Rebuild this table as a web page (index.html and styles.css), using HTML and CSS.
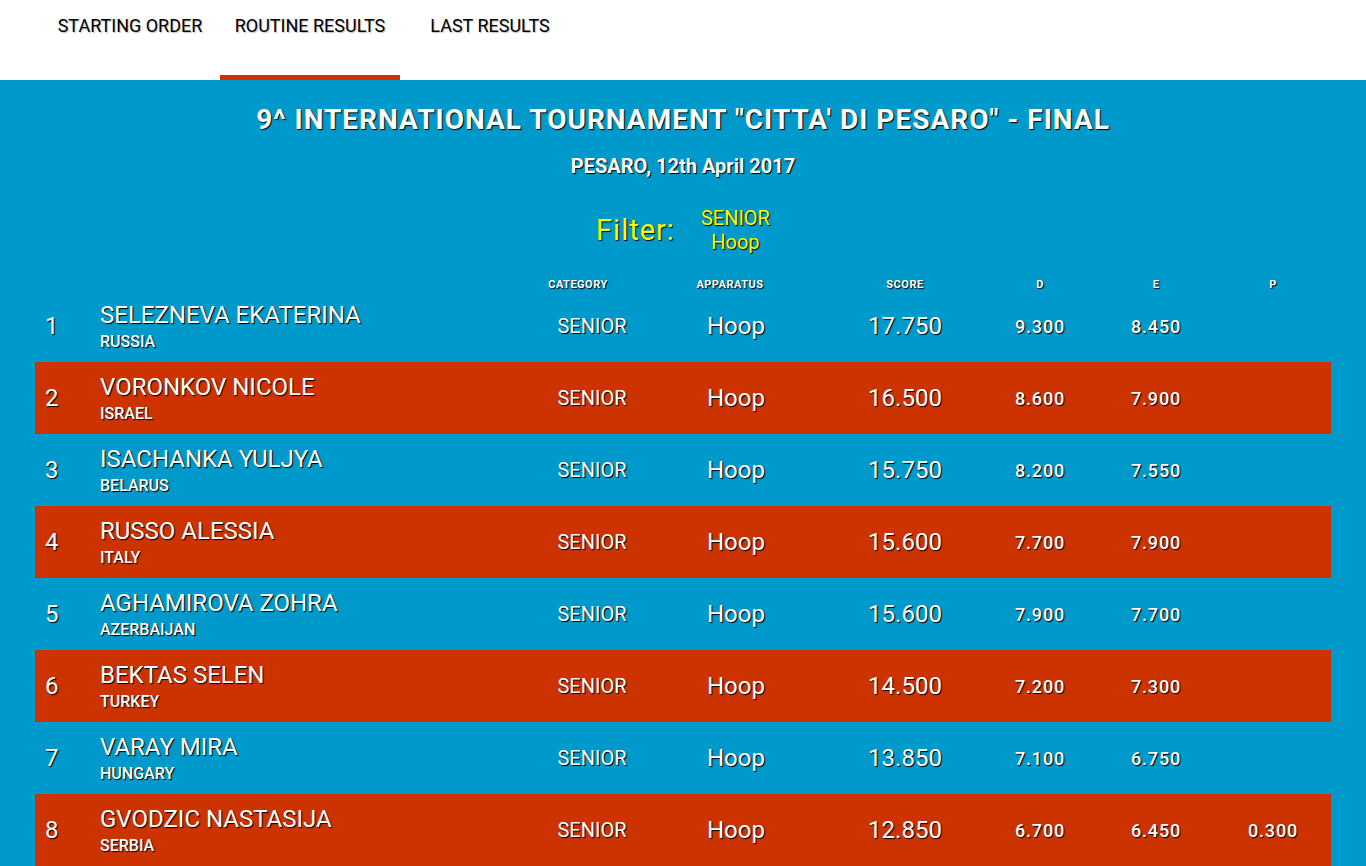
FILE: index.html
```html
<!DOCTYPE html>
<html lang="en">
<head>
<meta charset="utf-8">
<title>Routine Results</title>
<link rel="stylesheet" href="styles.css">
</head>
<body>
<header class="topbar">
  <nav class="tabs">
    <a class="tab" href="#">STARTING ORDER</a>
    <a class="tab active" href="#">ROUTINE RESULTS</a>
    <a class="tab" href="#">LAST RESULTS</a>
  </nav>
</header>
<main class="board">
  <h1 class="title">9^ INTERNATIONAL TOURNAMENT "CITTA' DI PESARO" - FINAL</h1>
  <p class="subtitle">PESARO, 12th April 2017</p>
  <div class="filter">
    <span class="filter-label">Filter:</span>
    <div class="filter-values">
      <span>SENIOR</span>
      <span>Hoop</span>
    </div>
  </div>
  <div class="results">
    <div class="row head">
      <span></span>
      <span></span>
      <span class="c-cat">CATEGORY</span>
      <span class="c-app">APPARATUS</span>
      <span class="c-score">SCORE</span>
      <span class="c-d">D</span>
      <span class="c-e">E</span>
      <span class="c-p">P</span>
    </div>
    <div class="row">
      <span class="rank">1</span>
      <div class="athlete"><span class="name">SELEZNEVA EKATERINA</span><span class="country">RUSSIA</span></div>
      <span class="c-cat">SENIOR</span><span class="c-app">Hoop</span><span class="c-score">17.750</span><span class="c-d">9.300</span><span class="c-e">8.450</span><span class="c-p"></span>
    </div>
    <div class="row">
      <span class="rank">2</span>
      <div class="athlete"><span class="name">VORONKOV NICOLE</span><span class="country">ISRAEL</span></div>
      <span class="c-cat">SENIOR</span><span class="c-app">Hoop</span><span class="c-score">16.500</span><span class="c-d">8.600</span><span class="c-e">7.900</span><span class="c-p"></span>
    </div>
    <div class="row">
      <span class="rank">3</span>
      <div class="athlete"><span class="name">ISACHANKA YULJYA</span><span class="country">BELARUS</span></div>
      <span class="c-cat">SENIOR</span><span class="c-app">Hoop</span><span class="c-score">15.750</span><span class="c-d">8.200</span><span class="c-e">7.550</span><span class="c-p"></span>
    </div>
    <div class="row">
      <span class="rank">4</span>
      <div class="athlete"><span class="name">RUSSO ALESSIA</span><span class="country">ITALY</span></div>
      <span class="c-cat">SENIOR</span><span class="c-app">Hoop</span><span class="c-score">15.600</span><span class="c-d">7.700</span><span class="c-e">7.900</span><span class="c-p"></span>
    </div>
    <div class="row">
      <span class="rank">5</span>
      <div class="athlete"><span class="name">AGHAMIROVA ZOHRA</span><span class="country">AZERBAIJAN</span></div>
      <span class="c-cat">SENIOR</span><span class="c-app">Hoop</span><span class="c-score">15.600</span><span class="c-d">7.900</span><span class="c-e">7.700</span><span class="c-p"></span>
    </div>
    <div class="row">
      <span class="rank">6</span>
      <div class="athlete"><span class="name">BEKTAS SELEN</span><span class="country">TURKEY</span></div>
      <span class="c-cat">SENIOR</span><span class="c-app">Hoop</span><span class="c-score">14.500</span><span class="c-d">7.200</span><span class="c-e">7.300</span><span class="c-p"></span>
    </div>
    <div class="row">
      <span class="rank">7</span>
      <div class="athlete"><span class="name">VARAY MIRA</span><span class="country">HUNGARY</span></div>
      <span class="c-cat">SENIOR</span><span class="c-app">Hoop</span><span class="c-score">13.850</span><span class="c-d">7.100</span><span class="c-e">6.750</span><span class="c-p"></span>
    </div>
    <div class="row">
      <span class="rank">8</span>
      <div class="athlete"><span class="name">GVODZIC NASTASIJA</span><span class="country">SERBIA</span></div>
      <span class="c-cat">SENIOR</span><span class="c-app">Hoop</span><span class="c-score">12.850</span><span class="c-d">6.700</span><span class="c-e">6.450</span><span class="c-p">0.300</span>
    </div>
  </div>
</main>
</body>
</html>
```

FILE: styles.css
```css
* { box-sizing: border-box; }
html, body { margin: 0; padding: 0; }
body {
  font-family: Roboto, "Noto Sans", "Liberation Sans", sans-serif;
  background: #0099cc;
  color: #fff;
  min-height: 866px;
}
.topbar {
  height: 80px;
  background: #fff;
}
.tabs {
  display: flex;
  padding-left: 40px;
  height: 80px;
}
.tab {
  width: 180px;
  height: 80px;
  padding-top: 15px;
  text-align: center;
  color: #000;
  text-decoration: none;
  font-size: 18px;
  line-height: 22px;
  text-shadow: 1px 1px 1px rgba(0,0,0,0.25);
  border-bottom: 5px solid transparent;
}
.tab.active { border-bottom-color: #cc3300; }

.board {
  padding: 24px 35px 0 35px;
}
.title, .subtitle, .filter, .row { text-shadow: 1px 1px 1px #000; }
.title {
  margin: 0;
  text-align: center;
  font-size: 28px;
  line-height: 32px;
  font-weight: 700;
  letter-spacing: 1px;
}
.subtitle {
  margin: 18px 0 0;
  text-align: center;
  font-size: 20px;
  line-height: 24px;
  font-weight: 700;
}
.filter {
  margin-top: 28px;
  display: flex;
  justify-content: center;
  align-items: center;
  gap: 26px;
  color: #ffff00;
}
.filter-label {
  font-size: 29px;
  line-height: 34px;
  letter-spacing: 1px;
}
.filter-values {
  display: flex;
  flex-direction: column;
  align-items: center;
  font-size: 20px;
  line-height: 24px;
}
.results { margin-top: 25px; }
.row {
  display: grid;
  grid-template-columns: 65px 420px 144px 144px 194px 76px 156px 78px 20px;
  align-items: center;
  height: 72px;
}
.row:nth-child(odd) { background: #cc3300; }
.row.head {
  height: 11px;
  line-height: 11px;
  font-weight: 700;
  background: transparent;
}
.row > span { text-align: center; }
.row .rank {
  text-align: left;
  padding-left: 10px;
  font-size: 24px;
}
.athlete {
  display: flex;
  flex-direction: column;
}
.name { font-size: 24px; line-height: 28px; }
.country { font-size: 16px; line-height: 18px; font-weight: 500; margin-top: 4px; }
.c-cat { font-size: 20px; }
.c-app { font-size: 24px; }
.c-score { font-size: 24px; }
.c-d, .c-e, .c-p { font-size: 18px; font-weight: 500; letter-spacing: 0.8px; }
.row.head span { font-size: 11px; letter-spacing: 0.5px; font-weight: 700; }
.row.head .c-cat { padding-right: 28px; }
.row.head .c-app { padding-right: 12px; }
```
